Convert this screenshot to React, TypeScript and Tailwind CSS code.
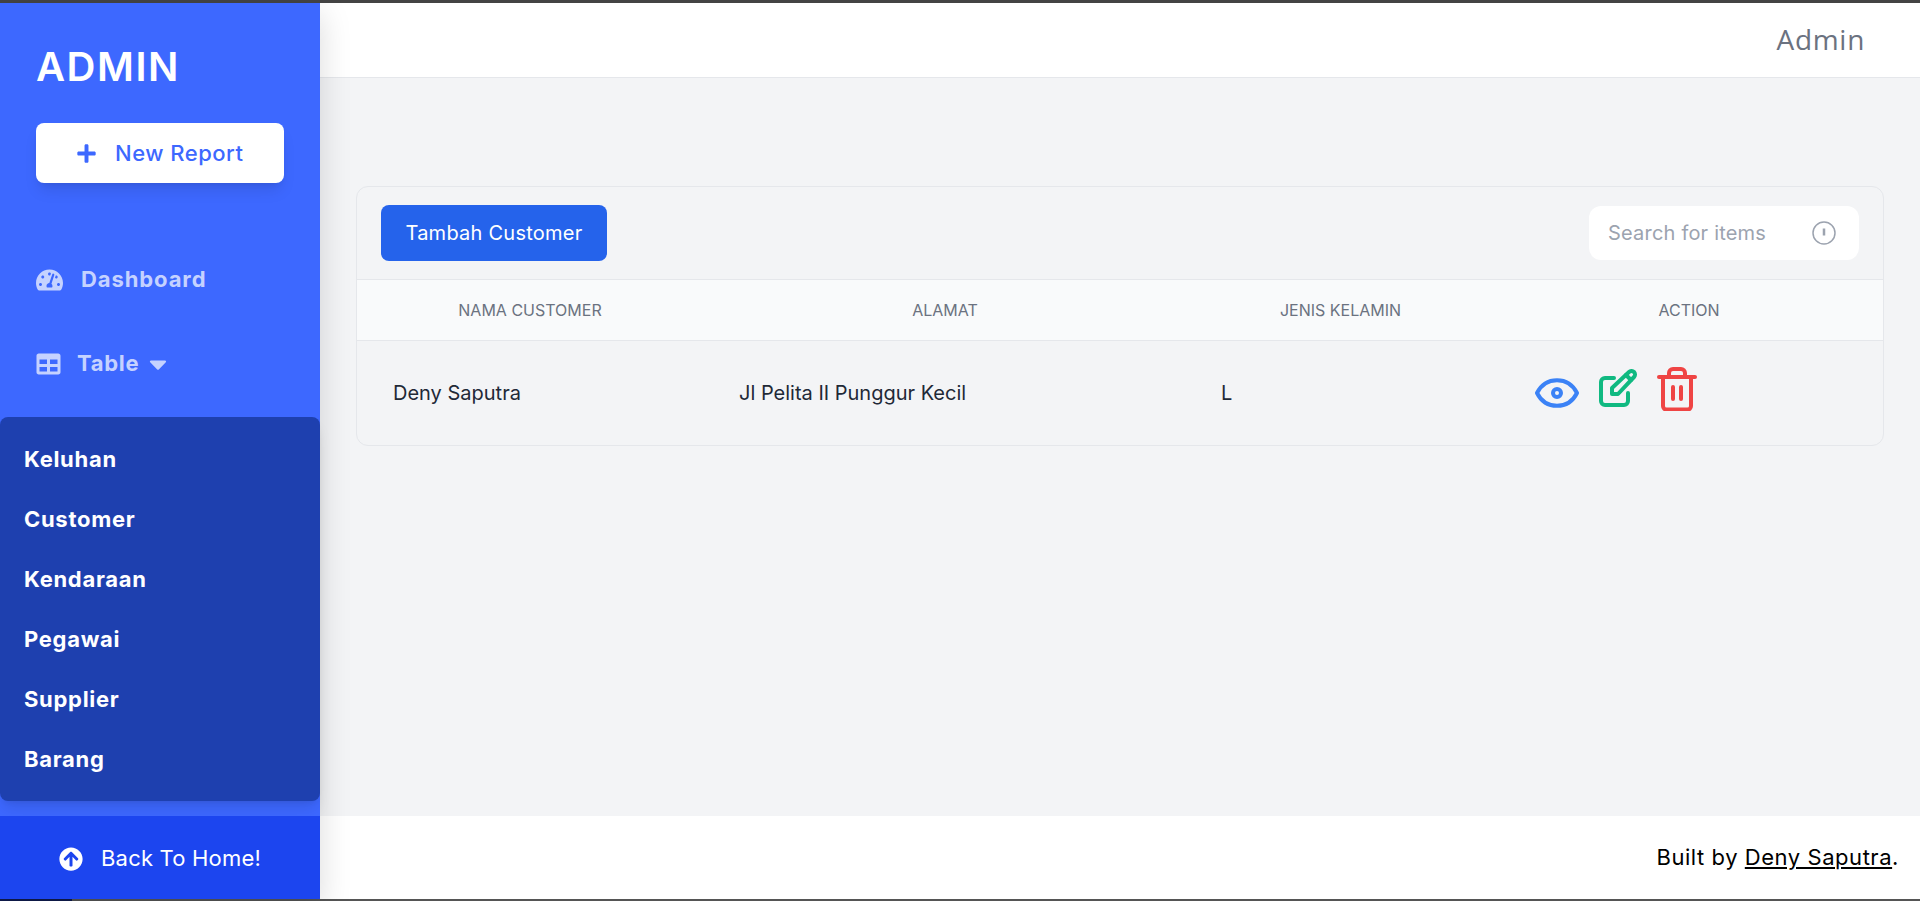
import { FaArrowCircleUp, FaCaretDown, FaPlus, FaTable, FaTachometerAlt } from "react-icons/fa";

const subItems = ["Keluhan", "Customer", "Kendaraan", "Pegawai", "Supplier", "Barang"];

function EyeIcon() {
  return (
    <svg width="44" height="30" viewBox="0 0 44 30" fill="none" stroke="#3b82f6" strokeWidth="4" strokeLinejoin="round">
      <path d="M2 15C6 7 13 2.2 22 2.2S38 7 42 15C38 23 31 27.8 22 27.8S6 23 2 15Z" />
      <circle cx="22" cy="15" r="4" />
    </svg>
  );
}

function EditIcon() {
  return (
    <svg width="38" height="38" viewBox="0 0 38 38" fill="none" stroke="#10b981" strokeWidth="4" strokeLinecap="round" strokeLinejoin="round" className="mb-[9px]">
      <path d="M15 9H6a4 4 0 0 0-4 4v19a4 4 0 0 0 4 4h19a4 4 0 0 0 4-4v-8" />
      <path d="M13 25v-6L30 3a3.6 3.6 0 0 1 5 0 3.6 3.6 0 0 1 0 5L19 25Z" />
      <path d="M27 6l5 5" />
    </svg>
  );
}

function TrashIcon() {
  return (
    <svg width="40" height="44" viewBox="0 0 40 44" fill="none" stroke="#ef4444" strokeWidth="4" strokeLinecap="round" strokeLinejoin="round" className="mb-[7px]">
      <path d="M2 10h36" />
      <path d="M12 10V6a4 4 0 0 1 4-4h8a4 4 0 0 1 4 4v4" />
      <path d="M6 10v29a3.5 3.5 0 0 0 3.5 3.5h21A3.5 3.5 0 0 0 34 39V10" />
      <path d="M16 20v12M24 20v12" />
    </svg>
  );
}

export default function App() {
  return (
    <div className="flex h-[901px] flex-col overflow-hidden bg-[#f3f4f6] font-['Inter',sans-serif]">
      <div className="h-[3px] shrink-0 bg-[#444444]" />
      <div className="flex min-h-0 flex-1">
        <aside className="z-10 flex w-[320px] shrink-0 flex-col bg-[#3d68ff] shadow-[0_10px_30px_rgba(0,0,0,0.15)]">
          <div className="flex-1 min-h-0">
            <div className="px-9 pt-[40px]">
              <div className="text-[40px] leading-[48px] font-semibold tracking-[1.5px] text-white">ADMIN</div>
              <button className="mt-[32px] flex h-[60px] w-[248px] items-center rounded-lg bg-white pl-10 text-[22px] font-medium tracking-[0.5px] text-[#3d68ff] shadow-lg">
                <FaPlus className="mr-[18px] h-[21px] w-[21px]" />
                New Report
              </button>
            </div>
            <div className="mt-[80px] flex items-center gap-[18px] px-9 text-[22px] font-bold tracking-[0.9px] text-[#c5d2ff]">
              <FaTachometerAlt className="h-[26px] w-[27px]" />
              Dashboard
            </div>
            <div className="mt-[51px] flex items-center gap-[16px] px-9 text-[22px] font-bold tracking-[0.7px] text-[#c5d2ff]">
              <FaTable className="h-[24px] w-[25px]" />
              Table
              <FaCaretDown className="-ml-[6px] h-[28px] w-[18px]" />
            </div>
            <div className="mt-[37px] flex h-[384px] flex-col justify-center rounded-lg bg-[#1e40af] px-6 shadow-lg">
              {subItems.map((item) => (
                <div key={item} className="flex h-[60px] items-center text-[22px] font-bold tracking-[0.7px] text-white">
                  {item}
                </div>
              ))}
            </div>
          </div>
          <div className="flex h-[83px] shrink-0 items-center justify-center gap-[18px] bg-[#1c45ef] pt-[2px] text-[22px] tracking-[0.2px] text-white">
            <FaArrowCircleUp className="h-6 w-6" />
            Back To Home!
          </div>
        </aside>
        <div className="flex min-w-0 flex-1 flex-col">
          <header className="flex h-[75px] shrink-0 items-center justify-end border-b border-[#e5e7eb] bg-white pr-[55px] pb-[2px] font-['Open_Sans',sans-serif] text-[28px] tracking-[0.7px] text-[#6b7280]">
            Admin
          </header>
          <main className="min-h-0 flex-1 pt-[108px] pr-[36px] pl-9">
            <div className="overflow-hidden rounded-xl border border-[#e5e7eb]">
              <div className="flex h-[92px] items-center justify-between pr-6 pl-6">
                <button className="h-[56px] w-[226px] rounded-lg bg-[#2563eb] text-[20px] tracking-[0.25px] text-white">Tambah Customer</button>
                <div className="flex h-[54px] w-[270px] items-center justify-between rounded-xl bg-white pr-[23px] pl-[19px] text-[20px] tracking-[0.2px] text-[#9ca3af]">
                  Search for items
                  <svg width="24" height="24" viewBox="0 0 24 24" fill="none" stroke="#9ca3af">
                    <circle cx="12" cy="12" r="11" strokeWidth="1.5" />
                    <path d="M12 7.5v7" strokeWidth="2.5" />
                  </svg>
                </div>
              </div>
              <table className="w-full table-fixed">
                <colgroup>
                  <col className="w-[346px]" />
                  <col className="w-[482px]" />
                  <col className="w-[310px]" />
                  <col />
                </colgroup>
                <thead>
                  <tr className="h-[61px] border-y border-[#e5e7eb] bg-[#f9fafb] text-[16px] text-[#6b7280]">
                    <th className="font-normal">NAMA CUSTOMER</th>
                    <th className="pl-[2px] font-normal">ALAMAT</th>
                    <th className="pl-[1px] font-normal">JENIS KELAMIN</th>
                    <th className="font-normal">ACTION</th>
                  </tr>
                </thead>
                <tbody>
                  <tr className="h-[104px] text-[20px] text-[#1f2937]">
                    <td className="pl-9">Deny Saputra</td>
                    <td className="pl-9">Jl Pelita II Punggur Kecil</td>
                    <td className="pl-9">L</td>
                    <td className="pl-10">
                      <div className="flex items-center gap-5">
                        <EyeIcon />
                        <EditIcon />
                        <TrashIcon />
                      </div>
                    </td>
                  </tr>
                </tbody>
              </table>
            </div>
          </main>
          <footer className="flex h-[83px] shrink-0 items-center justify-end bg-white pr-[21px] text-[22px] tracking-[0.55px] text-black">
            <span>
              Built by <span className="underline">Deny Saputra</span>.
            </span>
          </footer>
        </div>
      </div>
      <div className="flex h-[2px] shrink-0 bg-[#555555]">
        <div className="w-[72px] bg-[#0f1b4d]" />
      </div>
    </div>
  );
}
